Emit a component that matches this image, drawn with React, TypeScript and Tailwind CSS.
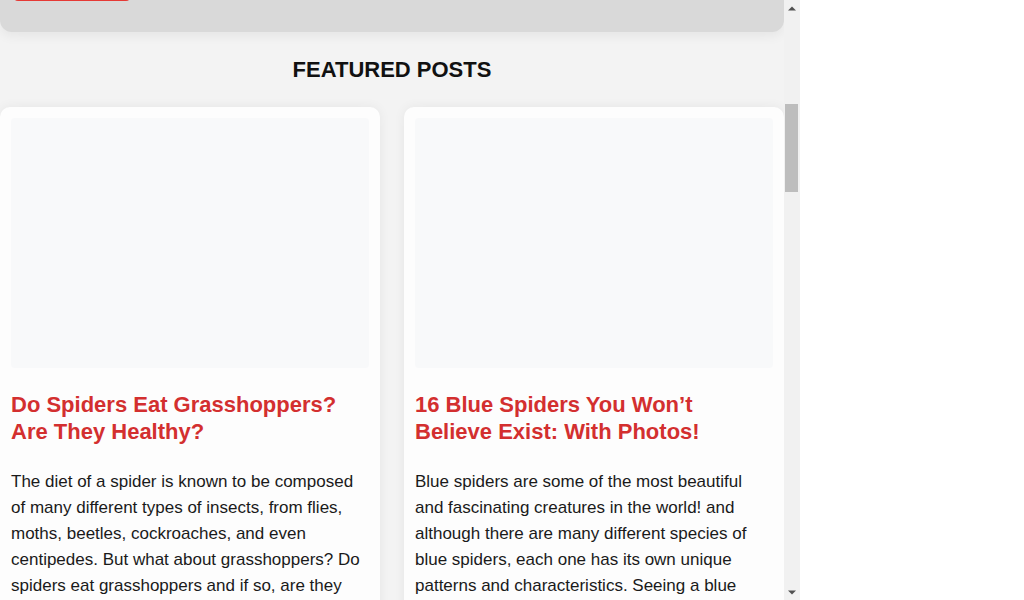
import { useEffect, useRef } from "react";

const POSTS = [
  {
    title: "Do Spiders Eat Grasshoppers? Are They Healthy?",
    excerpt:
      "The diet of a spider is known to be composed of many different types of insects, from flies, moths, beetles, cockroaches, and even centipedes. But what about grasshoppers? Do spiders eat grasshoppers and if so, are they healthy for them? Let’s find out everything you need to know.",
  },
  {
    title: "16 Blue Spiders You Won’t Believe Exist: With Photos!",
    excerpt:
      "Blue spiders are some of the most beautiful and fascinating creatures in the world! and although there are many different species of blue spiders, each one has its own unique patterns and characteristics. Seeing a blue spider in the wild is a rare treat for any nature lover.",
  },
  {
    title: "How Long Can a Spider Live Without Food?",
    excerpt:
      "Spiders are remarkably resilient animals. Some species can survive for weeks or even months without a meal, slowing down their metabolism to save energy until prey comes along again.",
  },
  {
    title: "Are House Spiders Dangerous to Pets?",
    excerpt:
      "Most spiders found indoors are harmless to cats and dogs. Still, a few species can deliver a painful bite, so it helps to know which ones to look out for around the home.",
  },
];

function PostCard({ title, excerpt }: { title: string; excerpt: string }) {
  return (
    <div className="bg-[#fdfdfd] rounded-[10px] p-[11px] shadow-[0_0_12px_rgba(0,0,0,0.06)]">
      <div className="h-[250px] rounded-[4px] bg-[#f8f9fa]" />
      <h3 className="mt-[23px] text-[22px] leading-[27px] font-bold text-[#d32f2f]">{title}</h3>
      <p className="mt-[24px] text-[17px] leading-[26px] text-[#1a1a1a]">{excerpt}</p>
      <div className="mt-6 mb-2 inline-block rounded bg-[#e53935] px-4 py-2 text-sm font-bold text-white">
        Read More
      </div>
    </div>
  );
}

// classic scrollbar drawn by hand, the headless browser hides its own
function Scrollbar() {
  return (
    <div className="w-4 h-[600px] bg-[#f1f1f1] flex flex-col">
      <div className="h-4 flex items-center justify-center">
        <svg width="8" height="5" viewBox="0 0 8 5">
          <path d="M0 4.5 L4 0.5 L8 4.5 Z" fill="#505050" />
        </svg>
      </div>
      <div className="flex-1">
        <div className="mt-[88px] ml-[1px] w-[13px] h-[88px] bg-[#bdbdbd]" />
      </div>
      <div className="h-4 flex items-center justify-center">
        <svg width="8" height="5" viewBox="0 0 8 5">
          <path d="M0 0.5 L8 0.5 L4 4.5 Z" fill="#505050" />
        </svg>
      </div>
    </div>
  );
}

export default function App() {
  const scroller = useRef<HTMLDivElement>(null);

  useEffect(() => {
    if (scroller.current) scroller.current.scrollTop = 600;
  }, []);

  return (
    <div className="w-[1024px] h-[600px] bg-white flex font-['Liberation_Sans',Arial,sans-serif]">
      <div ref={scroller} className="w-[784px] h-[600px] overflow-hidden bg-[#f3f3f3]">
        <header className="h-[632px] bg-[#d9d9d9] rounded-b-[12px] shadow-[0_4px_12px_rgba(0,0,0,0.06)] flex flex-col justify-end pb-[31px] px-[14px]">
          <h1 className="text-3xl font-bold text-[#222] mb-6">Spider Facts</h1>
          <div className="w-[116px] h-10 rounded bg-[#e53935]" />
        </header>

        <section>
          <h2 className="pt-[25px] mb-[24px] text-center text-[22px] leading-[26px] font-bold text-[#111]">
            FEATURED POSTS
          </h2>
          <div className="grid grid-cols-2 gap-6">
            {POSTS.map((p) => (
              <PostCard key={p.title} title={p.title} excerpt={p.excerpt} />
            ))}
          </div>
        </section>

        <section className="py-10">
          <h2 className="text-center text-[22px] leading-[26px] font-bold text-[#111] mb-6">LATEST POSTS</h2>
          <div className="grid grid-cols-2 gap-6">
            {POSTS.map((p) => (
              <PostCard key={"l" + p.title} title={p.title} excerpt={p.excerpt} />
            ))}
          </div>
        </section>

        <footer className="h-[300px] bg-[#d9d9d9] rounded-t-[12px]" />
      </div>
      <Scrollbar />
    </div>
  );
}
